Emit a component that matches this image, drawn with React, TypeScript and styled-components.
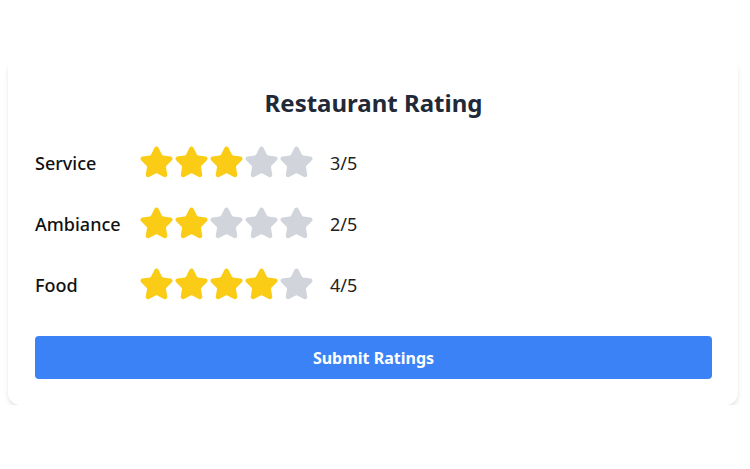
import React from "react";
import styled, { createGlobalStyle } from "styled-components";

const GlobalStyle = createGlobalStyle`
  html, body {
    margin: 0;
    padding: 0;
    background: #ffffff;
    font-family: "Noto Sans", "Open Sans", sans-serif;
  }
`;

const Page = styled.div`
  padding: 57px 12px 0 8px;
`;

const Card = styled.div`
  background: #ffffff;
  border-radius: 12px;
  box-shadow: 0 4px 6px -1px rgba(0, 0, 0, 0.1), 0 2px 4px -2px rgba(0, 0, 0, 0.1);
  padding: 28px 26px 26px 27px;
  display: flex;
  flex-direction: column;
`;

const Title = styled.h2`
  margin: 0 0 24px;
  text-align: center;
  font-size: 24px;
  line-height: 36px;
  font-weight: 700;
  color: #1f2937;
`;

const Rows = styled.div`
  display: flex;
  flex-direction: column;
  gap: 26px;
`;

const Row = styled.div`
  display: flex;
  align-items: center;
  height: 35px;
  gap: 8px;
`;

const Label = styled.span`
  width: 96px;
  font-size: 18px;
  font-weight: 500;
  color: #111111;
`;

const Stars = styled.div`
  display: flex;
`;

const StarButton = styled.button<{ $on: boolean }>`
  border: 0;
  background: none;
  padding: 0;
  margin: 0;
  width: 35px;
  height: 35px;
  display: flex;
  cursor: pointer;
  color: ${(p) => (p.$on ? "#facc15" : "#d1d5db")};
  svg {
    width: 35px;
    height: 35px;
  }
`;

const Score = styled.span`
  margin-left: 8px;
  font-size: 18px;
  color: #222222;
`;

const Submit = styled.button`
  margin-top: 34px;
  height: 43px;
  border: 0;
  border-radius: 4px;
  background: #3b82f6;
  color: #ffffff;
  font-family: "Noto Sans", "Open Sans", sans-serif;
  font-size: 16px;
  font-weight: 700;
  cursor: pointer;
`;

const StarIcon = () => (
  <svg viewBox="0 0 24 24" fill="currentColor" stroke="currentColor" strokeWidth={2} strokeLinecap="round" strokeLinejoin="round">
    <path d="M11.525 2.295a.53.53 0 0 1 .95 0l2.31 4.679a2.123 2.123 0 0 0 1.595 1.16l5.166.756a.53.53 0 0 1 .294.904l-3.736 3.638a2.123 2.123 0 0 0-.611 1.878l.882 5.14a.53.53 0 0 1-.771.56l-4.618-2.428a2.122 2.122 0 0 0-1.973 0L6.396 21.01a.53.53 0 0 1-.77-.56l.881-5.139a2.122 2.122 0 0 0-.611-1.879L2.16 9.795a.53.53 0 0 1 .294-.906l5.165-.755a2.122 2.122 0 0 0 1.597-1.16z" />
  </svg>
);

const ratings = [
  { label: "Service", value: 3 },
  { label: "Ambiance", value: 2 },
  { label: "Food", value: 4 },
];

export default function App() {
  return (
    <Page>
      <GlobalStyle />
      <Card>
        <Title>Restaurant Rating</Title>
        <Rows>
          {ratings.map((r) => (
            <Row key={r.label}>
              <Label>{r.label}</Label>
              <Stars>
                {[1, 2, 3, 4, 5].map((i) => (
                  <StarButton key={i} $on={i <= r.value} aria-label={`${i} stars`}>
                    <StarIcon />
                  </StarButton>
                ))}
              </Stars>
              <Score>{r.value}/5</Score>
            </Row>
          ))}
        </Rows>
        <Submit>Submit Ratings</Submit>
      </Card>
    </Page>
  );
}
